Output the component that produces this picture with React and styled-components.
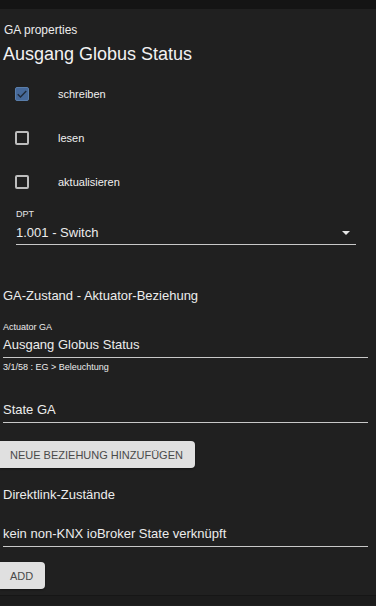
import styled, { createGlobalStyle } from "styled-components";

const Global = createGlobalStyle`
  html, body {
    margin: 0;
    padding: 0;
    background: #202020;
    font-family: "Liberation Sans", Arial, sans-serif;
    color: #ececec;
  }
`;

export default function App() {
  return (
    <>
      <Global />
      <TopBar />
      <Panel>
        <Caption>GA properties</Caption>
        <Title>Ausgang Globus Status</Title>
        <CheckList>
          <CheckRow>
            <Box checked>
              <svg width="12" height="12" viewBox="0 0 24 24">
                <path d="M3.5 12.5l5.5 5.5L20.5 6" fill="none" stroke="#1f2a38" strokeWidth="2.8" />
              </svg>
            </Box>
            <CheckLabel>schreiben</CheckLabel>
          </CheckRow>
          <CheckRow>
            <Box />
            <CheckLabel>lesen</CheckLabel>
          </CheckRow>
          <CheckRow>
            <Box />
            <CheckLabel>aktualisieren</CheckLabel>
          </CheckRow>
        </CheckList>
        <SelectField>
          <SmallLabel>DPT</SmallLabel>
          <SelectValue>
            1.001 - Switch
            <Arrow />
          </SelectValue>
        </SelectField>

        <Heading>GA-Zustand - Aktuator-Beziehung</Heading>
        <Field top={16}>
          <TinyLabel>Actuator GA</TinyLabel>
          <Input>Ausgang Globus Status</Input>
          <Helper>3/1/58 : EG &gt; Beleuchtung</Helper>
        </Field>
        <Field top={25}>
          <Input>State GA</Input>
        </Field>
        <Button top={18}>NEUE BEZIEHUNG HINZUFÜGEN</Button>

        <Heading top={18}>Direktlink-Zustände</Heading>
        <Field top={18}>
          <Input>kein non-KNX ioBroker State verknüpft</Input>
        </Field>
        <Button top={15}>ADD</Button>
      </Panel>
      <Footer />
    </>
  );
}

const TopBar = styled.div`
  height: 9px;
  background: #141414;
`;

const Panel = styled.div`
  display: flex;
  flex-direction: column;
  align-items: flex-start;
  padding: 13px 0 6px 0;
  border-bottom: 1px solid #161616;
`;

const Caption = styled.div`
  font-size: 12px;
  line-height: 16px;
  padding-left: 4px;
`;

const Title = styled.div`
  font-size: 18px;
  line-height: 22px;
  margin-top: 5px;
  padding-left: 3px;
  color: #f2f2f2;
`;

const CheckList = styled.div`
  display: flex;
  flex-direction: column;
  gap: 29px;
  margin-top: 21px;
  padding-left: 15px;
`;

const CheckRow = styled.div`
  display: flex;
  align-items: center;
  height: 15px;
`;

const Box = styled.div`
  width: 14px;
  height: 14px;
  box-sizing: border-box;
  border-radius: 2px;
  border: ${(p) => (p.checked ? "1px solid #5a7eaa" : "2px solid #bdbdbd")};
  background: ${(p) => (p.checked ? "#46699a" : "transparent")};
  display: flex;
  align-items: center;
  justify-content: center;
`;

const CheckLabel = styled.span`
  margin-left: 29px;
  font-size: 11px;
  color: #f0f0f0;
`;

const SelectField = styled.div`
  margin: 19px 0 0 16px;
  width: 340px;
`;

const SmallLabel = styled.div`
  font-size: 9px;
  line-height: 12px;
  color: #e6e6e6;
`;

const SelectValue = styled.div`
  display: flex;
  align-items: center;
  justify-content: space-between;
  font-size: 13px;
  line-height: 18px;
  margin-top: 4px;
  padding-bottom: 2px;
  border-bottom: 1px solid #c8c8c8;
`;

const Arrow = styled.span`
  width: 0;
  height: 0;
  margin-right: 6px;
  border-left: 4px solid transparent;
  border-right: 4px solid transparent;
  border-top: 4px solid #e6e6e6;
`;

const Heading = styled.div`
  font-size: 13px;
  line-height: 18px;
  margin-top: ${(p) => p.top ?? 42}px;
  padding-left: 3px;
`;

const Field = styled.div`
  width: 365px;
  margin-top: ${(p) => p.top ?? 18}px;
  padding-left: 3px;
`;

const TinyLabel = styled.div`
  font-size: 9px;
  line-height: 12px;
`;

const Input = styled.div`
  font-size: 13px;
  line-height: 18px;
  margin-top: 3px;
  padding-bottom: 3px;
  border-bottom: 1px solid #c8c8c8;
`;

const Helper = styled.div`
  font-size: 9px;
  line-height: 12px;
  margin-top: 3px;
`;

const Button = styled.div`
  margin-top: ${(p) => p.top ?? 16}px;
  height: 27px;
  padding: 0 12px 0 10px;
  display: flex;
  align-items: center;
  background: #e0e0e0;
  color: #4a4a4a;
  font-size: 11px;
  border-radius: 0 4px 4px 0;
  box-shadow: 0 1px 2px rgba(0, 0, 0, 0.4);
`;

const Footer = styled.div`
  height: 9px;
  background: #1c1c1c;
`;
